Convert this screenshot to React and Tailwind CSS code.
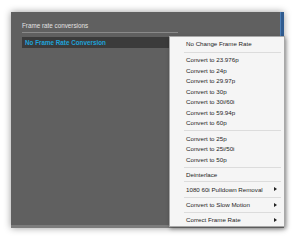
import React from 'react'

const groups = [
  ['Convert to 23.976p', 'Convert to 24p', 'Convert to 29.97p', 'Convert to 30p', 'Convert to 30i/60i', 'Convert to 59.94p', 'Convert to 60p'],
  ['Convert to 25p', 'Convert to 25i/50i', 'Convert to 50p'],
]

const subMenus = ['1080 60i Pulldown Removal', 'Convert to Slow Motion', 'Correct Frame Rate']

const Sep = ({ className = '' }) => (
  <div className={`ml-[14px] mr-[3px] h-px bg-[#dcdcdc] ${className}`} />
)

const App = () => {
  return (
    <div className="w-[297px] h-[240px] bg-white overflow-hidden" style={{ fontFamily: '"Liberation Sans", Arial, sans-serif' }}>
      <div className="relative ml-[11px] mt-[12px] w-[273px] h-[216px] flex flex-col bg-[#606060] shadow-[0_0_7px_rgba(0,0,0,0.4)]">
        {/* panel body */}
        <div className="flex-1 flex">
          <div className="flex-1 flex flex-col pl-[11px] pt-[10px]">
            <div className="text-[6.3px] leading-[8px] text-[#e2e2e2]">Frame rate conversions</div>
            <div className="mt-[2px] w-[156px] h-px bg-[#8a8a8a]" />
            <div className="mt-[4px] w-[150px] h-[11px] bg-[#3b3b3b] flex items-center pl-[3px]">
              <span className="text-[6.3px] font-bold text-[#1ea3da]">No Frame Rate Conversion</span>
            </div>
          </div>
          <div className="w-[4px] bg-[#2f5b8f] border-l border-[#4f7fb5]" />
        </div>
        <div className="h-[3px] bg-[#7c7c7c]" />

        {/* dropdown menu */}
        <div className="absolute left-[158px] top-[24px] w-[116px] h-[191px] bg-[#f5f5f5] border border-[#a8a8a8] shadow-[1px_2px_4px_rgba(0,0,0,0.35)] pt-[1px] text-[6.2px] text-[#1e1e1e] flex flex-col">
          <div className="h-[12px] flex items-center pl-[16px]">No Change Frame Rate</div>
          <Sep className="my-[2px]" />
          {groups.map((g, gi) => (
            <React.Fragment key={gi}>
              {g.map((t) => (
                <div key={t} className="h-[10.7px] flex items-center pl-[16px]">{t}</div>
              ))}
              <Sep className="my-[2px]" />
            </React.Fragment>
          ))}
          <div className="h-[10.7px] flex items-center pl-[16px]">Deinterlace</div>
          {subMenus.map((t) => (
            <React.Fragment key={t}>
              <Sep className="my-[1px]" />
              <div className="h-[12.5px] flex items-center pl-[16px] pr-[7px]">
                <span className="flex-1">{t}</span>
                <svg width="3" height="4" viewBox="0 0 3 4"><path d="M0 0 L3 2 L0 4 Z" fill="#222" /></svg>
              </div>
            </React.Fragment>
          ))}
        </div>
      </div>
    </div>
  )
}

export default App
